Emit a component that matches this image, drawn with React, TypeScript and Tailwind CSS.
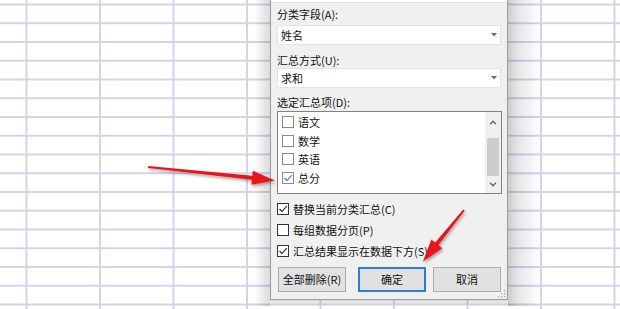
import * as React from "react";

const font = "font-['Microsoft_YaHei_UI','Noto_Sans_CJK_SC',sans-serif]";

function Check({ color }: { color: string }) {
  return (
    <svg width="10" height="10" viewBox="0 0 10 10" fill="none">
      <polyline points="1.5,5 4,7.5 8.8,2.2" stroke={color} strokeWidth="1.1" />
    </svg>
  );
}

function Box({ checked, light }: { checked?: boolean; light?: boolean }) {
  return (
    <span
      className={`flex h-[12px] w-[12px] shrink-0 items-center justify-center border bg-white ${
        light ? "border-[#8a8a8a]" : "border-[#333333]"
      }`}
    >
      {checked ? <Check color={light ? "#3b6fd0" : "#222"} /> : null}
    </span>
  );
}

function Select({ value }: { value: string }) {
  return (
    <div className="flex h-[20px] w-[224px] items-center justify-between border border-[#e3e3e3] bg-white pl-[3px] pr-[3px]">
      <span className="text-[11px] leading-[14px] text-[#111]">{value}</span>
      <svg width="6" height="4" viewBox="0 0 6 4">
        <polygon points="0,0 6,0 3,3.5" fill="#6d6d6d" />
      </svg>
    </div>
  );
}

function Chevron({ up }: { up?: boolean }) {
  return (
    <svg width="8" height="5" viewBox="0 0 8 5" fill="none">
      <polyline
        points={up ? "1,4.2 4,1.2 7,4.2" : "1,0.8 4,3.8 7,0.8"}
        stroke="#606060"
        strokeWidth="1.3"
      />
    </svg>
  );
}

const items = [
  { label: "语文", checked: false },
  { label: "数学", checked: false },
  { label: "英语", checked: false },
  { label: "总分", checked: true },
];

const options = [
  { label: "替换当前分类汇总(C)", checked: true },
  { label: "每组数据分页(P)", checked: false },
  { label: "汇总结果显示在数据下方(S)", checked: true },
];

export default function App() {
  return (
    <div
      className={`relative h-[309px] w-[620px] overflow-hidden bg-white ${font} bg-[linear-gradient(to_right,#d3d3ea_1.5px,transparent_1.5px),linear-gradient(to_bottom,#d3d3ea_1.5px,transparent_1.5px)] bg-[size:73.5px_18.75px] bg-[position:25.5px_3.5px]`}
    >
      {/* window shadow */}
      <div className="absolute left-[254px] top-0 h-[306px] w-[16px] bg-[linear-gradient(to_right,rgba(0,0,0,0),rgba(0,0,0,0.14))]" />
      <div className="absolute left-[508px] top-0 h-[306px] w-[32px] bg-[linear-gradient(to_left,rgba(0,0,0,0),rgba(0,0,0,0.10)_70%,rgba(0,0,0,0.2))]" />
      <div className="absolute left-[270px] top-[300px] h-[6px] w-[238px] bg-[linear-gradient(to_bottom,rgba(0,0,0,0.14),rgba(0,0,0,0))]" />

      {/* dialog window */}
      <div className="absolute left-[270px] top-0 flex h-[300px] w-[238px] flex-col border-x border-b border-x-[#9c9c9c] border-b-[#9c9c9c] bg-[#f0f0f0] px-[6px]">
        <div className="-mx-[6px] h-[3px] border-b border-b-[#e2e2e2] bg-white" />
        <div className="mt-[4px] text-[11px] leading-[14px] text-[#111]">分类字段(A):</div>
        <div className="mt-[4px]">
          <Select value="姓名" />
        </div>
        <div className="mt-[8px] text-[11px] leading-[14px] text-[#111]">汇总方式(U):</div>
        <div className="mt-[1px]">
          <Select value="求和" />
        </div>
        <div className="mt-[7px] text-[11px] leading-[14px] text-[#111]">选定汇总项(D):</div>
        <div className="mt-[2px] flex h-[83px] w-[225px] border border-[#828282] bg-white">
          <div className="flex flex-1 flex-col pl-[4px] pt-[1px]">
            {items.map((it) => (
              <div key={it.label} className="flex h-[18.6px] items-center gap-[4px]">
                <Box checked={it.checked} light />
                <span className="text-[11px] leading-[14px] text-[#111]">{it.label}</span>
              </div>
            ))}
          </div>
          <div className="flex w-[16px] flex-col items-center bg-[#f0f0f0]">
            <div className="flex h-[17px] items-center justify-center pt-[3px]">
              <Chevron up />
            </div>
            <div className="mt-[9px] h-[38px] w-[12px] bg-[#cdcdcd]" />
            <div className="mt-auto flex h-[16px] items-center justify-center pb-[2px]">
              <Chevron />
            </div>
          </div>
        </div>
        <div className="mt-[4px] flex flex-col">
          {options.map((o) => (
            <div key={o.label} className="flex h-[21px] items-center gap-[4px]">
              <Box checked={o.checked} />
              <span className="text-[11px] leading-[14px] text-[#111]">{o.label}</span>
            </div>
          ))}
        </div>
        <div className="mt-[6px] flex">
          <button className="ml-[1px] flex h-[25px] w-[68px] items-center justify-center border border-[#adadad] bg-[#e1e1e1] text-[11px] text-[#111]">
            全部删除(R)
          </button>
          <button className="ml-[12px] flex h-[25px] w-[68px] items-center justify-center border-2 border-[#2a7fd4] bg-[#e1e1e1] text-[11px] text-[#111]">
            确定
          </button>
          <button className="ml-[7px] flex h-[25px] w-[68px] items-center justify-center border border-[#adadad] bg-[#e1e1e1] text-[11px] text-[#111]">
            取消
          </button>
        </div>
        <svg className="absolute bottom-[1px] right-[1px]" width="8" height="8" viewBox="0 0 8 8">
          <g fill="#b5b5b5">
            <rect x="6" y="0" width="1.5" height="1.5" />
            <rect x="3" y="3" width="1.5" height="1.5" />
            <rect x="6" y="3" width="1.5" height="1.5" />
            <rect x="0" y="6" width="1.5" height="1.5" />
            <rect x="3" y="6" width="1.5" height="1.5" />
            <rect x="6" y="6" width="1.5" height="1.5" />
          </g>
        </svg>
      </div>

      {/* annotation arrows */}
      <svg className="pointer-events-none absolute inset-0" width="620" height="309" viewBox="0 0 620 309">
        <defs>
          <filter id="sh" x="-20%" y="-20%" width="140%" height="140%">
            <feDropShadow dx="1" dy="2" stdDeviation="1.4" floodColor="#000" floodOpacity="0.35" />
          </filter>
        </defs>
        <g fill="#e8161d" filter="url(#sh)">
          <polygon points="148.1,166 252.3,175.7 252.8,170.8 275,180.5 251.4,184.7 251.9,179.7 147.9,168" />
          <polygon points="464.8,210.6 438.4,245.1 442.3,248.2 423,261.5 431.3,239.4 435.2,242.5 463.2,209.4" />
        </g>
      </svg>
    </div>
  );
}
